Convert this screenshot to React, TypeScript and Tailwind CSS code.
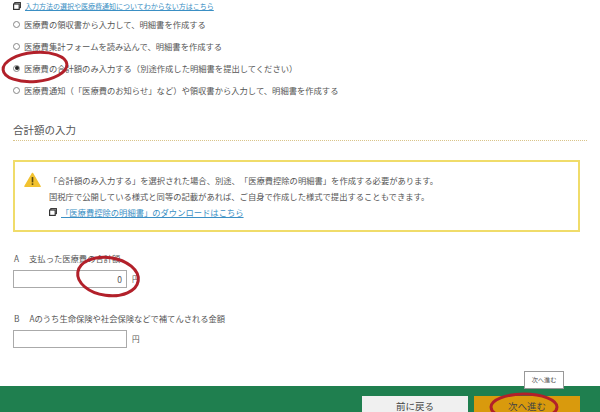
const font = { fontFamily: '"Noto Sans CJK JP","Liberation Sans",sans-serif' };

function LinkIcon() {
  return (
    <svg width="8" height="8" viewBox="0 0 8 8" className="shrink-0">
      <rect x="1.8" y="0.6" width="5.6" height="5" fill="none" stroke="#333" strokeWidth="1.1" />
      <rect x="0.6" y="2" width="5.6" height="5.4" fill="#fff" stroke="#333" strokeWidth="1.2" />
    </svg>
  );
}

function Radio({ label, checked }: { label: string; checked?: boolean }) {
  return (
    <div className="flex h-[22px] items-center gap-[4px] pl-[13px] text-[8.3px] text-[#555]">
      <span className="flex h-[7px] w-[7px] items-center justify-center rounded-full border border-[#888] bg-white">
        {checked && <span className="h-[4px] w-[4px] rounded-full bg-[#222]" />}
      </span>
      <span className="whitespace-nowrap">{label}</span>
    </div>
  );
}

function Amount({ mark, label, value }: { mark: string; label: string; value?: string }) {
  return (
    <div className="pl-[13px]">
      <div className="flex gap-[10px] whitespace-nowrap pl-[1px] text-[8.3px] leading-[12px] text-[#555]">
        <span>{mark}</span>
        <span>{label}</span>
      </div>
      <div className="mt-[6px] flex items-center gap-[5px]">
        <div className="flex h-[18px] w-[114px] items-center justify-end border border-[#aaa] bg-white pr-[4px] text-[8.5px] text-[#555]">
          {value}
        </div>
        <span className="text-[7.6px] text-[#555]">円</span>
      </div>
    </div>
  );
}

export default function App() {
  return (
    <div className="relative flex h-[412px] w-[600px] flex-col overflow-hidden bg-white [text-spacing-trim:space-all]" style={font}>
      <div className="flex h-[12px] items-center gap-[4px] pl-[13px]">
        <LinkIcon />
        <span className="whitespace-nowrap text-[7px] text-[#3a8fc4] underline">
          入力方法の選択や医療費通知についてわからない方はこちら
        </span>
      </div>
      <div className="mt-[1px] flex flex-col">
        <Radio label="医療費の領収書から入力して、明細書を作成する" />
        <Radio label="医療費集計フォームを読み込んで、明細書を作成する" />
        <Radio checked label="医療費の合計額のみ入力する（別途作成した明細書を提出してください）" />
        <Radio label="医療費通知（「医療費のお知らせ」など）や領収書から入力して、明細書を作成する" />
      </div>

      <div className="mx-[13px] mt-[21px] border-b border-dotted border-[#d9c48a] pb-[2px] text-[10.5px] leading-[16px] text-[#555]">
        合計額の入力
      </div>

      <div className="mx-[13px] mt-[19px] flex h-[72px] w-[567px] items-center gap-[8px] border-2 border-[#f0dc6a] pl-[9px]">
        <svg width="17" height="16" viewBox="0 0 19 17" className="mb-[32px] shrink-0">
          <path d="M9.5 1.2 L18 15.6 H1 Z" fill="#f2c230" stroke="#f2c230" strokeWidth="1.6" strokeLinejoin="round" />
          <rect x="8.6" y="5.2" width="1.8" height="6" fill="#5a4a10" />
          <rect x="8.6" y="12.2" width="1.8" height="1.8" fill="#5a4a10" />
        </svg>
        <div className="text-[8.3px] leading-[16px] text-[#555]">
          <div className="whitespace-nowrap">
            「合計額のみ入力する」を選択された場合、別途、「医療費控除の明細書」を作成する必要があります。
          </div>
          <div className="whitespace-nowrap">
            国税庁で公開している様式と同等の記載があれば、ご自身で作成した様式で提出することもできます。
          </div>
          <div className="flex items-center gap-[4px]">
            <LinkIcon />
            <span className="whitespace-nowrap text-[#3a8fc4] underline">「医療費控除の明細書」のダウンロードはこちら</span>
          </div>
        </div>
      </div>

      <div className="mt-[20px]">
        <Amount mark="A" label="支払った医療費の合計額" value="0" />
      </div>
      <div className="mt-[24px]">
        <Amount mark="B" label="Aのうち生命保険や社会保険などで補てんされる金額" />
      </div>

      <div className="mt-auto flex h-[26px] items-start justify-end gap-[6px] bg-[#1f7f4f] pr-[20px] pt-[10px]">
        <div className="flex h-[30px] w-[106px] items-start justify-center bg-[#f0f0f0] pt-[3px] text-[9.5px] text-[#444]">前に戻る</div>
        <div className="flex h-[30px] w-[106px] items-start justify-center bg-[#d99a0d] pt-[3px] text-[9.5px] text-[#444]">次へ進む</div>
      </div>

      <div className="absolute left-[524px] top-[371px] flex h-[18px] w-[40px] items-center justify-center border border-[#999] bg-white text-[6.2px] text-[#555]">
        次へ進む
      </div>

      <svg width="600" height="412" viewBox="0 0 600 412" className="pointer-events-none absolute left-0 top-0">
        <g fill="none" stroke="#b2202a" strokeWidth="3">
          <ellipse cx="35" cy="67" rx="32" ry="14.5" transform="rotate(-5 35 67)" />
          <ellipse cx="108" cy="276.5" rx="30.5" ry="19" transform="rotate(8 108 276.5)" />
          <ellipse cx="524" cy="407" rx="33" ry="13" />
        </g>
      </svg>
    </div>
  );
}
